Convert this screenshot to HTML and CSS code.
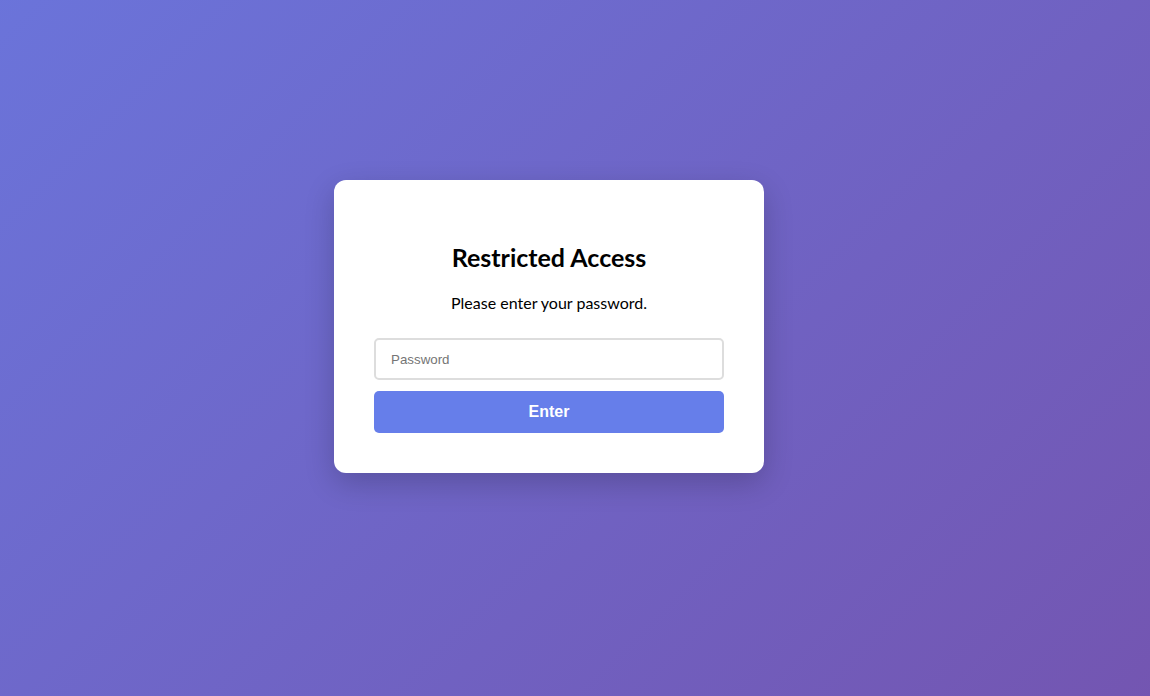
FILE: index.html
```html
<!DOCTYPE html>
<html lang="en">
<head>
<meta charset="utf-8">
<title>Restricted Access</title>
<link rel="stylesheet" href="styles.css">
</head>
<body>
<main class="page">
  <form class="card">
    <h2 class="title">Restricted Access</h2>
    <p class="lead">Please enter your password.</p>
    <input class="field" type="password" placeholder="Password">
    <button class="btn" type="button">Enter</button>
  </form>
</main>
</body>
</html>
```
FILE: styles.css
```css
html, body {
  margin: 0;
  height: 100%;
}
body {
  background: linear-gradient(135deg, #6a76dd -8%, #7453ae 108%);
  font-family: Lato, "Open Sans", sans-serif;
}
.page {
  box-sizing: border-box;
  height: 100%;
  display: flex;
  align-items: center;
  justify-content: center;
  padding: 0 52px 43px 0;
}
.card {
  box-sizing: border-box;
  width: 430px;
  background: #fff;
  border-radius: 12px;
  padding: 61px 40px 40px;
  box-shadow: 0 10px 30px rgba(0, 0, 0, 0.2);
  display: flex;
  flex-direction: column;
  text-align: center;
}
.title {
  margin: 0;
  font-size: 25px;
  line-height: 32px;
  font-weight: 700;
  color: #000;
}
.lead {
  margin: 19px 0 0;
  font-size: 16px;
  line-height: 22px;
  color: #000;
}
.field {
  box-sizing: border-box;
  margin: 24px 0 0;
  height: 42px;
  width: 100%;
  border: 2px solid #ddd;
  border-radius: 5px;
  padding: 0 15px;
  font-family: "Liberation Sans", Arial, sans-serif;
  font-size: 13.33px;
  color: #000;
  background: #fff;
  outline: none;
}
.field::placeholder {
  color: #757575;
}
.btn {
  box-sizing: border-box;
  margin: 11px 0 0;
  height: 42px;
  width: 100%;
  border: none;
  border-radius: 5px;
  background: #667eea;
  color: #fff;
  font-family: "Liberation Sans", Arial, sans-serif;
  font-size: 16px;
  font-weight: 700;
  cursor: pointer;
}
```
